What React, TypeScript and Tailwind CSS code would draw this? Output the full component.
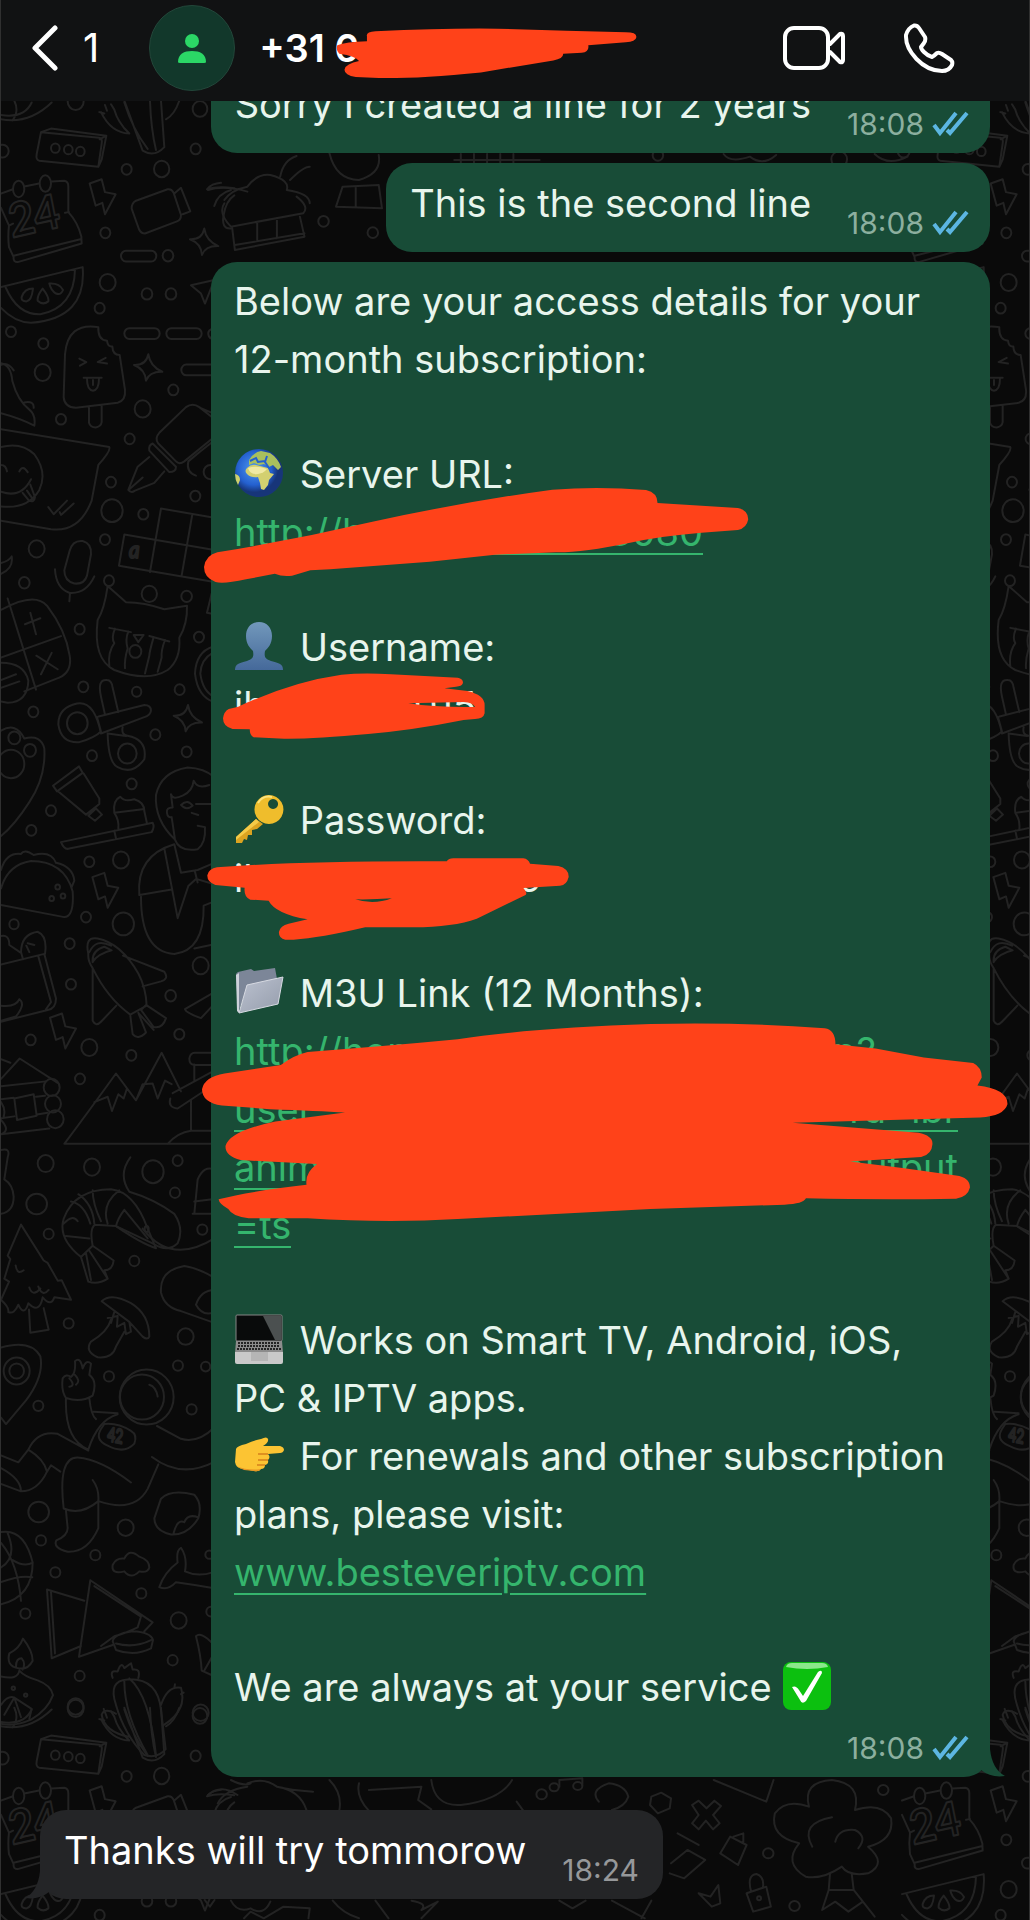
import type { ReactNode } from "react";

const BOLT = "M0 12 L36 0 L46 36 L78 42 L46 98 L38 66 L18 74 Z";
const STAR = "M43 0 Q48 34 85 49 Q46 48 36 74 Q34 42 0 30 Q36 32 43 0Z";

const dotsTop = [
  [597, 53, 22], [584, 165, 15], [377, 222, 15], [482, 221, 23], [313, 400, 15], [501, 464, 16],
  [320, 539, 24], [438, 571, 16], [510, 571, 16], [296, 611, 15], [30, 677, 15], [127, 710, 15],
  [125, 791, 24], [517, 840, 15], [425, 893, 24], [180, 922, 15], [386, 977, 15], [330, 1098, 15],
  [333, 1178, 32], [583, 1137, 15], [427, 1188, 15], [312, 1259, 15], [107, 1285, 24], [70, 1380, 16],
  [324, 1374, 15], [445, 1411, 23], [557, 1418, 16], [236, 1510, 15], [594, 1532, 15], [5, 171, 18],
  [163, 163, 13], [202, 167, 13], [238, 172, 13], [224, 32, 24], [628, 1070, 20],
];

const dotsMid = [
  [247, 187, 15], [407, 201, 14], [536, 195, 15], [97, 257, 15], [463, 321, 15], [273, 380, 15],
  [557, 369, 15], [392, 459, 15], [150, 534, 15], [91, 589, 15], [265, 677, 15], [360, 672, 24],
  [39, 852, 14], [255, 832, 15], [367, 851, 32], [206, 906, 15], [599, 968, 24], [210, 1020, 15],
  [509, 1052, 16], [535, 1160, 15], [89, 1176, 15], [265, 1197, 24], [391, 1219, 15], [237, 1285, 15],
  [134, 1522, 24], [273, 1532, 24], [530, 1514, 15], [456, 1545, 32], [229, 289, 31], [379, 374, 28],
  [40, 330, 18], [87, 365, 18], [30, 403, 40], [152, 1309, 24], [156, 1355, 24], [163, 1398, 25],
  [170, 748, 7], [152, 780, 7], [186, 773, 7],
];

const dotsLow = [
  [143, 171, 15], [522, 87, 15], [604, 162, 15], [400, 226, 15], [203, 353, 15],
  [554, 380, 24], [531, 439, 15], [614, 441, 14], [324, 461, 15], [112, 521, 15], [572, 528, 15],
  [374, 769, 24], [120, 795, 15], [283, 825, 15], [163, 860, 15], [421, 903, 15],
  [73, 944, 15], [533, 958, 24], [515, 1039, 15], [236, 1071, 15], [224, 1133, 24], [599, 1146, 24],
  [47, 450, 22], [47, 450, 39], [625, 824, 12], [630, 940, 14], [37, 1096, 5], [74, 1110, 5],
];

/* squash evens out groups whose x and y scales differ */
function Dots({ items, squash = 1 }: { items: number[][]; squash?: number }) {
  return (
    <>
      {items.map(([x, y, r], i) => (
        <ellipse key={i} cx={x} cy={y} rx={r} ry={r * squash} />
      ))}
    </>
  );
}

function Wallpaper() {
  return (
    <svg
      aria-hidden="true"
      className="absolute inset-0 h-full w-full fill-none stroke-[#232323] stroke-2 [&_*]:[vector-effect:non-scaling-stroke]"
      strokeLinecap="round"
      strokeLinejoin="round"
    >
      <g id="column">
        <g id="column-top" transform="translate(0 90) scale(.3333 .3571)">
          <Dots items={dotsTop} />
          {/* cactus and planet */}
          <path d="M-10 80 Q80 100 152 35 M0 70 Q70 80 92 35 M40 30 Q55 60 35 85 M300 62 Q330 120 385 122 Q350 90 340 55 L330 40 M312 42 L318 58 M295 62 L310 66 M370 30 L425 170 Q460 190 490 160 L480 30 M370 35 Q395 110 440 165 M447 30 Q450 110 465 168 M535 30 Q520 70 495 82" />
          {/* cassette */}
          <path d="M120 118 L295 134 Q305 136 302 150 L292 215 L115 198 Q104 196 107 180 Z M120 118 L150 108 L316 128 L302 195 L292 215 M316 128 L296 138" />
          {/* calendar */}
          <path d="M0 290 L36 278 M70 270 L114 262 M152 256 L190 254 Q202 256 202 270 V342 Q230 370 241 410 L242 430 L50 482 Q36 482 38 468 L24 440 Q20 410 24 380 L0 330 M38 464 L238 418 M24 380 L36 374 M192 344 L204 342" />
          <ellipse cx="53" cy="277" rx="17" ry="23" />
          <ellipse cx="133" cy="262" rx="17" ry="23" />
          <text x="34" y="414" fontSize="132" fontFamily="Lato, sans-serif" fontWeight="700" transform="rotate(-12 34 414)">24</text>
          <path d={BOLT} transform="translate(266 250)" />
          {/* camera */}
          <path d="M405 310 L500 278 Q512 276 518 288 L540 350 Q540 364 528 368 L432 402 Q420 402 414 390 L392 332 Q392 316 405 310Z M520 290 L540 274 L568 340 L545 348" />
          <path d={STAR} transform="translate(567 388)" />
          <path d={STAR} transform="translate(399 740)" />
          <rect x="360" y="450" width="106" height="30" rx="15" />
          <rect x="370" y="667" width="106" height="30" rx="15" />
          <rect x="496" y="667" width="106" height="30" rx="15" />
          <rect x="541" y="769" width="120" height="30" rx="15" />
          <path d="M640 667 Q620 670 622 684 Q624 697 640 697" />
          {/* watermelon */}
          <path d="M0 552 L245 496 Q258 640 90 652 Q40 650 0 610 M14 553 Q50 630 118 628 Q220 610 222 502 M62 580 Q70 556 96 556 Q92 590 76 592 Q60 592 62 580Z M125 556 Q145 580 142 592 Q126 604 110 590 Q108 575 125 556Z M145 542 Q175 540 186 560 Q180 575 165 570 Q150 562 145 542Z" />
          <path d="M570 547 L640 532 L612 598 L600 570 Z M660 260 Q632 262 618 278 Q650 268 700 275 M640 325 Q650 290 690 280 M690 388 Q660 390 668 350 Q675 310 700 295" />
          {/* ice cream */}
          <path d="M292 664 Q200 650 192 740 L188 860 Q190 888 225 890 L350 876 Q375 870 372 840 L356 742 Q335 742 334 718 Q320 720 318 702 Q290 700 292 664Z M235 752 L256 762 L237 772 M314 750 L290 762 L318 766 M248 806 H302 M258 808 Q258 840 276 842 Q294 840 294 808 M276 812 V826 M264 890 V932 Q268 945 284 945 Q300 942 302 930 V884" />
          <path d="M0 765 Q30 770 34 815 Q50 870 85 895 Q105 910 100 940 Q60 920 0 905 M70 875 Q100 870 98 890 M0 770 Q20 760 38 785" />
          {/* chat bubble face */}
          <path d="M0 950 L325 1000 Q330 1010 292 1050 L272 1150 Q235 1240 150 1230 L0 1206 M0 1000 Q60 985 100 1020 Q140 1070 115 1120 Q80 1175 0 1166 M55 1068 Q65 1048 80 1070 M0 1050 Q15 1050 18 1068 M0 1125 Q60 1145 90 1090 M65 1128 L84 1150 Q100 1156 102 1140 L88 1105 M78 1122 L95 1145 M142 1168 L158 1188 L198 1150 M176 1182 L180 1190 L218 1158" />
          {/* fountain pen */}
          <path d="M555 888 Q575 875 595 888 L645 925 M555 888 L475 960 Q460 975 472 990 L525 1040 Q535 1050 550 1040 L635 975 M455 990 L525 1055 Q525 1070 505 1070 L445 1010 Q442 995 455 990 M445 1028 L410 1055 L382 1120 Q390 1130 402 1122 L460 1100 L490 1068 M385 1118 L425 1085 M598 890 L635 905 M585 1080 Q555 1070 562 1040 Q600 1010 635 985" />
          {/* crossword */}
          <path d="M480 1172 L640 1198 M480 1172 L447 1350 M370 1245 L640 1288 M370 1245 L354 1332 L640 1378 M574 1188 L542 1360" />
          <text x="384" y="1312" fontSize="62" fontFamily="Lato, sans-serif" fontStyle="italic">a</text>
          {/* microphone */}
          <path d="M206 1290 Q215 1260 245 1263 Q272 1270 270 1300 L258 1360 Q250 1385 220 1382 Q190 1375 190 1345 Z M162 1342 Q165 1395 205 1408 Q255 1412 280 1362 M207 1410 L205 1432" />
          <path d="M0 1325 Q25 1318 32 1306 Q38 1340 0 1355 M632 1410 L618 1464 L640 1468" />
        </g>

        <g transform="translate(0 620) scale(.3333 .3571)">
          <Dots items={dotsMid} />
          {/* pill blister and cat */}
          <path d="M0 -28 Q100 -80 138 -40 Q195 30 206 100 Q215 150 165 165 L70 200 M0 105 L180 45 M20 -60 L105 195 M72 12 L118 -5 M88 -20 L105 40 M106 100 L170 138 M152 92 L120 152 M0 120 Q70 120 82 170 Q80 230 20 232 L0 228 M0 168 L45 152 M0 190 L55 172" />
          <path d="M320 -95 Q310 -30 290 0 Q275 110 340 140 Q440 175 500 140 Q540 110 535 50 Q560 10 558 -40 L490 -30 Q430 -50 375 -50 Z M325 22 L390 34 M445 45 L505 60 M342 24 Q330 50 340 65 Q320 90 325 130 M382 32 Q372 55 380 80 Q370 110 372 135 M458 48 Q445 90 445 100 L432 150 M492 56 Q480 85 482 105 L470 145 M398 42 H428 L412 62 Z" />
          <circle cx="403" cy="88" r="18" />
          {/* scissors */}
          <path d="M300 215 Q288 165 318 168 Q332 168 335 190 L352 258 M293 270 L430 238 Q450 238 450 254 Q448 268 430 272 L300 318 M300 318 Q280 225 228 234 Q172 245 172 292 Q180 345 235 342 Q280 330 300 312 L288 272 M300 215 L312 265 M320 318 Q322 400 350 412 Q395 435 430 390 Q440 335 380 324 Q360 322 365 300 M320 318 L375 325" />
          <path d={STAR} transform="translate(518 238)" />
          {/* paw */}
          <path d="M0 310 Q45 285 70 332 Q120 320 130 360 Q135 440 85 510 Q40 575 0 605" />
          <path d="M582 150 Q585 90 635 75 M598 150 Q600 110 635 92 M582 150 Q590 215 640 230 M598 150 Q605 200 640 215" />
          {/* toothpaste and brush */}
          <path d="M156 464 L234 410 L245 428 L168 480 Z M172 480 L255 545 L295 515 V500 L248 430 M262 548 L285 528 L303 545 L282 562 Z M180 622 L455 568 Q462 580 452 594 L205 640 Q190 645 180 622Z M340 590 L345 612 M340 540 Q335 505 358 495 Q370 510 400 502 Q430 510 430 535 L438 570 M340 540 L425 530 M340 540 Q355 560 352 585" />
          {/* bearded face */}
          <path d="M522 615 Q460 560 465 490 Q480 425 560 413 Q610 415 640 440 M510 488 Q515 505 545 492 Q575 480 578 450 Q590 475 625 462 M510 488 L515 525 Q495 525 498 540 Q500 555 512 552 L522 615 Q535 650 590 642 Q615 625 612 580 L590 576 M540 518 Q560 500 575 520 Q555 535 540 518Z M585 515 H635 M572 540 L592 546" />
          <path d="M415 770 Q405 660 520 628 L540 708 L590 700 L640 680 M490 640 L530 835 L562 745 L585 725 L640 740 M415 770 L512 755 M420 775 Q420 930 520 935 Q610 925 608 800 L640 788 M580 920 L640 908 M582 705 L590 735" />
          {/* taco */}
          <path d="M0 752 Q20 685 90 675 Q190 675 215 760 Q220 830 190 832 L0 798 M0 700 Q15 650 60 655 Q70 640 98 658 Q150 645 165 680 Q215 690 220 730 L212 748" />
          <path d={BOLT} transform="translate(274 708)" />
          <path d={BOLT} transform="translate(147 1102)" />
          {/* shopping bag */}
          <path d="M0 965 L130 935 L165 1060 Q165 1088 140 1092 L0 1125 M112 942 L150 1070 L135 1090 M0 885 Q25 880 25 910 L60 932 Q60 880 110 873 Q140 885 132 935 M60 930 L66 950 M80 905 L100 910 M85 930 L76 912 M0 1080 Q45 1085 55 1062 Q75 1075 45 1110 L0 1122" />
          {/* rocket */}
          <path d="M262 935 Q250 885 290 892 Q360 905 412 990 Q435 1030 437 1080 L388 1105 Q320 1060 275 975 Q260 955 262 935Z M265 930 Q285 890 330 912 M275 958 Q272 925 310 915 L332 925 Q290 935 275 958 M366 940 L490 985 Q505 1005 480 1012 L425 1026 M275 975 V1122 Q285 1140 300 1125 L346 1080 M388 1108 L395 1160 Q410 1178 435 1155 L412 1100 M435 1078 L495 1115 Q485 1145 458 1140 L420 1092 M412 1100 L458 1148 M435 1078 L420 1092" />
          <path d="M635 1045 L552 1090 Q555 1100 600 1115 L635 1080" />
          {/* cabin and mountains */}
          <path d="M0 1285 L56 1228 L170 1296 M0 1306 L135 1292 M0 1230 L28 1240 M0 1342 L38 1338 M105 1335 L132 1332 M40 1340 L98 1328 L107 1388 L48 1400 Z M0 1395 L40 1390 M108 1385 L140 1380 M0 1440 L145 1424 M0 1350 Q15 1370 8 1390 M0 1400 Q30 1430 0 1440" />
          <path d="M640 1467 H190 Q260 1380 345 1270 L405 1345 L482 1212 L540 1320 M280 1350 L320 1335 L333 1375 L352 1328 L368 1340 L378 1312 M405 1345 L425 1300 L455 1298 L470 1340 L492 1290 L512 1300 M508 1340 Q500 1365 530 1368 L640 1300 M515 1325 L640 1262 M570 1345 V1430 H640 M500 1467 Q530 1435 570 1430 M580 1245 V1290 M565 1228 Q568 1210 585 1212 H640 M565 1228 Q565 1245 580 1246 H640" />
        </g>

        <g transform="translate(0 1150) scale(.3333 .4911)">
          <Dots items={dotsLow} squash={0.7} />
          <ellipse cx="107" cy="110" rx="31" ry="21" />
          <ellipse cx="113" cy="737" rx="31" ry="21" />
          <path d="M0 0 Q30 -5 20 15 L10 60 Q35 70 38 95 Q38 125 0 130 M388 15 Q350 50 385 85 Q460 100 520 130 Q550 160 530 190 Q500 210 455 190 L345 155 M425 160 Q510 235 640 180 M590 60 Q610 30 640 40 M580 105 L640 100 M575 130 H640 M590 60 L580 130" />
          {/* shrimp */}
          <path d="M240 218 Q170 180 188 140 Q220 80 330 80 Q400 85 440 160 L465 200 Q420 190 345 155 Q350 140 370 122 M275 195 Q265 160 282 152 L345 155 M188 150 Q215 130 230 145 M195 175 L265 180 M210 105 Q250 110 268 150 M232 90 Q275 110 280 150 M275 82 Q275 110 300 145 M355 82 Q300 110 320 150 M240 218 L275 195 L338 225 Q335 245 310 245 L320 262 Q290 275 262 268 Z M255 210 L270 265 M265 205 L320 262 M370 122 L440 180" />
          <circle cx="437" cy="161" r="6" />
          {/* pine tree */}
          <path d="M60 152 L20 215 L28 222 L10 262 L24 268 L0 305 Q25 320 22 330 Q40 335 52 315 Q70 340 82 312 Q115 335 125 300 Q150 320 160 300 L210 305 L182 265 L170 266 L140 230 L128 225 L60 152 M84 325 L88 372 L143 366 L128 322 M44 235 Q48 255 68 245 M85 280 Q95 300 118 282 M112 278 Q125 300 143 285" />
          {/* mushroom */}
          <path d="M302 308 Q330 290 390 312 Q445 335 445 380 Q440 388 425 380 L385 350 L302 308 M320 342 L350 338 L348 360 L370 352 L375 375 L390 370 L385 350 M330 345 Q320 370 270 390 Q250 410 290 422 Q335 425 345 400 L370 370 M340 330 L330 352" />
          <path d="M0 402 Q90 385 118 420 Q130 460 75 510 L15 558 L0 545" />
          <path d="M640 260 Q590 240 550 236 Q475 245 480 290 Q490 320 540 328 L640 352 M585 315 Q600 285 640 285 M585 315 Q605 340 640 330" />
          {/* astronaut */}
          <ellipse cx="437" cy="503" rx="81" ry="56" />
          <ellipse cx="423" cy="503" rx="66" ry="46" />
          <path d="M445 478 Q465 482 470 502 M195 505 Q190 590 262 610 Q290 550 350 538 M265 505 Q270 540 285 548 M278 533 L350 536 M82 610 Q110 570 170 578 L262 612 M82 610 L52 636 L0 622 M82 610 Q130 630 138 655 Q110 695 60 695 Q60 670 0 648 M138 655 L150 642 L178 655 M60 695 L0 680 M188 730 Q170 625 230 626 Q300 630 390 677 M188 730 Q240 745 292 715 V770 Q260 820 200 818 Q155 810 166 795 Q200 785 200 770 L195 735 M275 672 Q295 690 292 715 Q400 740 440 690 L472 640 M453 625 Q540 670 640 635 M468 562 L540 588 Q590 598 640 565 M195 505 Q180 490 185 465 Q195 455 210 462 Q225 455 222 430 Q238 420 245 445 Q255 425 270 435 L265 458 Q290 470 275 500 Q240 515 195 505 M205 465 Q225 480 205 482 M222 458 Q240 470 225 478" />
          <path d="M310 558 Q350 555 390 572 Q410 580 400 598 Q370 620 320 602 Q280 590 300 568Z" />
          <text x="318" y="592" fontSize="40" fontFamily="Lato, sans-serif" transform="rotate(8 318 592)">42</text>
          <path d="M480 710 Q510 690 580 702 Q605 720 592 750 Q560 785 510 783 Q460 775 460 750 Z M518 780 Q530 750 550 758 Q560 740 592 748 M335 845 Q345 830 370 832 Q385 810 415 828 Q445 835 445 850 Q440 862 415 858 Q390 875 370 858 Q330 865 335 845Z M475 890 Q490 860 530 840 Q525 815 540 810 Q560 830 552 858 Q590 870 635 860 M475 890 Q500 898 525 880 Q580 885 635 892" />
          {/* basketball */}
          <path d="M0 778 Q70 770 95 840 Q95 910 0 925 M0 800 Q50 840 60 918 M20 780 Q50 830 0 850 M35 835 Q70 850 95 840 M0 880 Q60 865 94 870" />
          {/* sandwich */}
          <path d="M138 895 L250 918 M138 895 L152 1035 L240 1010 M150 900 L162 1025 M268 876 L455 962 L430 980 M268 876 L234 1032 L335 1008 M280 888 L420 950 L410 972 Q370 985 340 990 L300 1010 M335 1000 Q340 985 395 980 Q450 982 456 998 L450 1015 Q400 1032 345 1018 Z M345 1005 Q400 1015 450 998" />
          {/* lamp */}
          <path d="M66 995 Q95 1020 95 1040 Q80 1060 50 1055 Q15 1050 25 1025 Q55 1015 66 995Z M45 1052 Q45 1035 62 1035 Q75 1045 65 1058 M0 1072 Q50 1080 55 1060 Q70 1072 110 1080 Q150 1090 156 1110 Q140 1140 90 1160 Q40 1175 0 1168 M0 1130 Q20 1110 40 1115 L92 1138 L85 1158 M10 1150 L40 1115 L60 1155" />
          {/* cactus */}
          <path d="M345 1130 Q320 1080 380 1078 Q470 1075 480 1140 L494 1220 Q470 1240 430 1232 Q370 1190 345 1130Z M370 1082 Q370 1150 440 1232 M385 1076 Q445 1110 465 1232 M335 1075 Q325 1058 350 1062 Q360 1040 370 1055 L390 1045 L395 1058 Q420 1055 412 1075 M480 1130 Q500 1090 540 1095 Q560 1140 490 1170 M345 1148 Q310 1135 302 1150 Q310 1185 385 1195 M520 1095 L522 1088 M540 1108 L548 1105 M312 1145 L308 1138" />
          <path d="M585 990 Q600 980 635 1005 M585 990 Q600 1030 602 1060 L635 1070 M610 1060 L635 1030" />
        </g>
      </g>
      <use href="#column" x="901" />
      <use href="#column-top" y="1607" />
      <use href="#column-top" x="901" y="1607" />

      {/* strip between the top bubbles */}
      <g transform="scale(.6569 .3333)">
        <path d="M315 570 Q340 555 375 575 M340 600 Q350 570 375 560 M375 560 Q390 520 410 525 Q440 540 435 570 Q470 580 470 610 M425 530 Q430 480 450 468 M440 540 Q460 500 470 500 M350 680 Q330 640 340 610 M350 680 L460 640 Q470 620 450 590 M352 685 L356 750 L462 710 L455 650 M390 670 V720 M420 655 V715 M356 735 L462 700 M500 460 Q510 540 545 540 Q580 520 575 465 M510 620 L520 560 L575 555 L580 625 Z M540 560 V620" />
        <path d="M690 480 H820 M700 462 V490 M720 462 V490 M740 462 V490 M760 462 V490 M780 462 V490 M1100 462 Q1110 490 1140 470 Q1160 500 1180 465 M1330 462 Q1350 500 1380 470" />
        <ellipse cx="1276" cy="478" rx="12" ry="24" />
        <ellipse cx="1000" cy="466" rx="8" ry="16" />
        <ellipse cx="491" cy="664" rx="8" ry="16" />
        <ellipse cx="566" cy="698" rx="8" ry="16" />
      </g>

      {/* strip under the last outgoing bubble */}
      <g transform="translate(0 1770) scale(.6569 .3333)">
        <path d="M315 75 Q335 40 360 75 M330 100 Q340 60 375 50 M375 40 Q400 20 420 50 Q455 60 465 120 M350 30 Q370 50 380 40 M420 50 Q440 60 475 65 M500 30 Q520 70 515 122 M545 40 Q540 80 560 122 M560 60 L640 50 L635 90 L655 118 M655 30 Q660 110 700 105 Q760 90 778 30 M785 95 L795 122 M850 50 V30 L885 25 V45 M910 95 Q895 60 925 40 Q950 45 955 80 Q950 110 930 120 M990 80 L1005 68 L1020 85 L1018 115 L1000 130 L988 105 Z" />
        <ellipse cx="823" cy="73" rx="8" ry="15" />
        <ellipse cx="842" cy="52" rx="7" ry="12" />
        <ellipse cx="878" cy="48" rx="7" ry="12" />
        <path d="M1052 105 L1062 92 L1074 115 L1086 92 L1096 108 L1084 135 L1094 160 L1084 178 L1073 152 L1062 178 L1052 160 L1062 135 Z M1085 30 L1165 95 L1176 30 M1030 190 L1062 225 M1020 280 L1045 240 L1072 270 L1040 325 L1018 310 M1095 250 L1110 200 L1135 225 L1122 285 Z M1115 200 L1130 190 V220 M1062 370 L1080 380 L1092 345 L1095 400 L1082 410 Z M1135 370 L1165 350 L1172 410 L1145 425 Z M1142 365 Q1135 315 1150 312 Q1162 320 1160 350" />
        <ellipse cx="1168" cy="250" rx="8" ry="15" />
        <ellipse cx="1208" cy="408" rx="8" ry="15" />
        <ellipse cx="1343" cy="60" rx="8" ry="15" />
        <ellipse cx="1154" cy="385" rx="3" ry="6" />
        {/* tree */}
        <path d="M1230 110 Q1220 35 1265 30 Q1310 40 1300 120 Q1340 95 1355 145 Q1360 210 1320 230 Q1350 280 1320 310 Q1290 320 1280 290 Q1250 330 1225 320 Q1190 280 1215 220 Q1170 200 1178 130 Q1195 85 1230 110 M1235 230 Q1215 160 1265 142 M1270 215 Q1275 175 1300 180 Q1320 200 1305 235 M1262 310 L1260 360 L1298 360 L1295 310 M1260 360 L1250 420 L1270 395 L1290 425 L1312 395 L1330 440 L1298 360" />
        <path d="M310 390 L318 410 L325 390 M350 392 Q360 430 380 415 Q400 440 410 395 M370 445 L380 425 L400 445 L430 410 L470 415 L468 445 M505 392 Q520 430 545 445 M570 392 L590 445 M625 392 Q650 400 640 420 L665 395 L640 445 M850 392 L870 415 L890 392 M930 392 L980 445 M990 392 L975 445" />
      </g>
    </svg>
  );
}

function Ticks() {
  return (
    <svg viewBox="0 0 37 26" className="h-[26px] w-[37px] fill-none stroke-[#5cb6e2] stroke-4" aria-label="Read" role="img">
      <path d="M2 14 L8 22 L24 2 M15 19 L18 22 L35 2" />
    </svg>
  );
}

function Stamp({ time, read }: { time: string; read?: boolean }) {
  return (
    <span className={read ? "flex items-center gap-2 text-[#8caf9f]" : "flex items-center text-[#96989a]"}>
      <time className="text-[30px] leading-7">{time}</time>
      {read && <Ticks />}
    </span>
  );
}

function Tail({ className }: { className: string }) {
  return (
    <svg viewBox="0 0 32 40" className={className} aria-hidden="true">
      <path d="M0 12 H17 Q19 32 32 39 Q18 41 8 33 L0 36 Z" />
    </svg>
  );
}

function ShortMessage({ text, time }: { text: string; time: string }) {
  return (
    <article className="flex items-end gap-9 self-end rounded-[26px] bg-[#184c37] pt-[11px] pr-[21px] pb-[15px] pl-6">
      <p className="pb-[5px]">{text}</p>
      <Stamp time={time} read />
    </article>
  );
}

function Emoji({ label, children }: { label: string; children: ReactNode }) {
  return (
    <svg viewBox="0 0 50 50" role="img" aria-label={label} className="mr-[5px] inline-block size-[50px] align-[-10px]">
      {children}
    </svg>
  );
}

/* link line whose middle part is hidden under the marker */
function HiddenLink({ start, end, className }: { start: string; end: string; className: string }) {
  return (
    <span className={`mb-[6px] flex h-[52px] justify-between border-b-2 border-[#35b56d] ${className}`}>
      <span>{start}</span>
      <span>{end}</span>
    </span>
  );
}

function Marker({ box, className, d }: { box: string; className: string; d: string }) {
  return (
    <svg viewBox={box} preserveAspectRatio="none" className={`pointer-events-none absolute fill-[#ff4219] ${className}`} aria-hidden="true">
      <path d={d} />
    </svg>
  );
}

function Header() {
  return (
    <header className="relative z-10 flex h-[101px] items-center bg-[#111213] pr-[74px] pb-[5px] pl-[30px] text-white">
      <button type="button" aria-label="Back" className="flex items-center gap-6">
        <svg viewBox="0 0 28 46" className="h-[46px] w-7 fill-none stroke-white stroke-5" strokeLinecap="round" strokeLinejoin="round">
          <path d="M24 3 L4 23 L24 43" />
        </svg>
        <span className="text-[40px]">1</span>
      </button>
      <svg viewBox="0 0 86 86" className="ml-[50px] size-[86px] shrink-0" aria-hidden="true">
        <circle cx="43" cy="43" r="42.5" fill="#12382b" stroke="#23473a" />
        <circle cx="43" cy="36" r="7" fill="#2bd766" />
        <path d="M29 57 C29 49 35 46 43 46 S57 49 57 57 Q57 58 55 58 H31 Q29 58 29 57Z" fill="#2bd766" />
      </svg>
      <h1 className="relative ml-6 text-[38px] font-semibold">
        +31 6
        <Marker
          box="515 90 457 154"
          className="top-2 left-[77px] h-[51px] w-[301px]"
          d="M562 115 Q560 102 575 100 Q680 90 760 92 L865 98 L955 103 Q972 103 971 118 Q970 132 955 133 L898 142 Q900 162 888 165 L860 168 Q860 183 845 188 L735 224 Q640 243 580 241 L545 238 Q527 232 528 215 Q530 198 550 190 Q545 175 520 168 Q514 155 517 142 Q530 132 562 130Z"
        />
      </h1>
      <nav className="ml-auto flex items-center gap-[58px]">
        <button type="button" aria-label="Video call">
          <svg viewBox="0 0 62 44" className="h-11 w-[62px] fill-none stroke-white stroke-4" strokeLinejoin="round" strokeLinecap="round">
            <rect x="2" y="2" width="43" height="40" rx="9" />
            <path d="M47 18 L57 8 Q60 7 60 10 V34 Q60 37 57 36 L47 26" />
          </svg>
        </button>
        <button type="button" aria-label="Voice call">
          <svg viewBox="0 0 52 50" className="h-[50px] w-[52px] fill-none stroke-white stroke-4" strokeLinejoin="round">
            <path d="M3 12 Q5 5 11 2.500 Q14 2 16 5 L22 14 Q23 17 21 20 L18 24 Q18 26 21 29 Q25 33 29 34 Q31 33 34 30 Q36 29 39 31 L48 37 Q50 39 49 42 Q46 48 39 48 C20 48 2 28 3 12Z" />
          </svg>
        </button>
      </nav>
    </header>
  );
}

function AccessMessage() {
  return (
    <article className="relative w-[779px] self-end rounded-[26px] bg-[#184c37] pt-[10px] pr-[21px] pb-[15px] pl-[23px]">
      <div className="flex flex-col gap-[57px] pb-[18px]">
        <p>
          Below are your access details for your
          <br />
          12-month subscription:
        </p>

        <div className="relative">
          <p>
            <Emoji label="Globe">
              <defs>
                <radialGradient id="sea" cx=".4" cy=".4">
                  <stop offset="0" stopColor="#4f9af0" />
                  <stop offset=".7" stopColor="#2460cf" />
                  <stop offset="1" stopColor="#173579" />
                </radialGradient>
              </defs>
              <circle cx="25" cy="25" r="24" fill="url(#sea)" />
              <path d="M15 12 Q20 4 27 3 L36 5 Q44 10 47 19 L44 22 L39 17 L35 19 L30 16 L25 17 L20 15 L15 17Z" fill="#a9bf5d" />
              <path d="M13 20 Q17 16 22 17 L34 20 L36 25 L40 26 L35 32 L34 37 L30 42 L27 41 L26 35 L24 29 Q17 30 13 26 Q10 23 13 20Z" fill="#d3d070" />
              <path d="M14 20 Q22 17 33 21 Q30 25 24 26 Q16 27 14 20Z" fill="#f0e9a4" />
              <path d="M16 13 L22 10 L24 14 L31 13 M33 8 L31 14 L35 20 L38 24" fill="none" stroke="#2460cf" strokeWidth="2" />
              <path d="M1 26 Q6 27 6 32 L4 37 Q1 32 1 26Z" fill="#cfd06b" />
            </Emoji>{" "}
            Server URL:
          </p>
          <a href="#server" className="block text-[#35b56d]">
            <HiddenLink start="http://h" end="8080" className="w-[469px]" />
          </a>
          <Marker
            box="10 178 1424 288"
            className="top-[42px] left-[-30px] h-24 w-[545px]"
            d="M45 374 Q250 335 450 282 Q700 220 920 186 Q1040 175 1165 187 Q1195 195 1195 226 L1405 241 Q1432 248 1432 275 Q1428 302 1405 307 L1310 315 Q1200 325 1120 346 Q1000 375 930 374 L770 381 L600 402 L340 425 L288 428 L240 444 Q215 448 195 438 L120 455 Q60 470 40 463 Q10 450 10 418 Q15 382 45 374Z"
          />
        </div>

        <div className="relative">
          <p>
            <Emoji label="User">
              <defs>
                <linearGradient id="bust" x2="0" y2="1">
                  <stop offset="0" stopColor="#7298bb" />
                  <stop offset="1" stopColor="#45699a" />
                </linearGradient>
              </defs>
              <path d="M25 1 C33 1 38 7 38 15 C38 23 34 27 31 30 C30 36 31 38 37 40 C45 42 49 43 49 49 H1 C1 43 5 42 13 40 C19 38 20 36 19 30 C16 27 12 23 12 15 C12 7 17 1 25 1Z" fill="url(#bust)" />
            </Emoji>{" "}
            Username:
          </p>
          <p className="flex w-[242px] justify-between">
            <span>ib</span>
            <span>015</span>
          </p>
          <Marker
            box="60 734 686 198"
            className="top-[55px] left-[-11px] h-[66px] w-[262px]"
            d="M75 842 L100 835 Q240 760 370 739 Q430 732 500 738 L675 748 Q690 752 688 765 Q685 775 670 775 L640 780 L700 788 Q745 800 745 830 V855 Q742 872 720 872 L690 875 Q560 905 440 917 Q300 932 220 931 L140 927 Q130 922 130 903 L85 902 Q60 895 60 870 Q62 850 75 842Z M545 825 Q620 838 720 836 Q715 822 690 821 Z"
          />
        </div>

        <div className="relative">
          <p>
            <Emoji label="Key">
              <path d="M22 25 L2 43 V49 L8 49 L10 45 L13 46 L14 41 L18 41 L18 36 L23 35 L29 30Z" fill="#dba320" />
              <path d="M22 25 L2 43 V46 L25 28Z" fill="#f4ca48" />
              <path d="M35 1 A14.500 14.500 0 1 1 34.900 1Z M39 5 A5 5 0 1 0 39.100 5Z" fillRule="evenodd" fill="#efbd2c" />
              <path d="M24 9 Q29 1 38 3" fill="none" stroke="#fbe37e" strokeWidth="2" />
            </Emoji>{" "}
            Password:
          </p>
          <p className="flex w-[308px] justify-between">
            <span>ib</span>
            <span>9</span>
          </p>
          <Marker
            box="20 238 1087 246"
            className="top-[67px] left-[-27px] h-[82px] w-[362px]"
            d="M50 266 Q300 246 740 248 Q745 239 760 239 H970 Q985 241 990 255 L1075 262 Q1107 270 1106 295 Q1100 320 1080 321 L970 328 Q985 345 975 350 L830 420 Q760 445 640 446 L495 446 Q360 478 280 483 H255 Q235 480 236 460 Q240 440 265 435 L322 422 Q225 405 205 366 L150 363 Q130 355 133 327 L45 319 Q20 310 21 290 Q25 270 50 266Z M465 362 Q520 380 575 359 Q520 363 465 362Z"
          />
        </div>

        <div className="relative">
          <p>
            <Emoji label="Folder">
              <defs>
                <linearGradient id="flap" x2="1" y2="1">
                  <stop offset="0" stopColor="#bcc2d0" />
                  <stop offset="1" stopColor="#949cab" />
                </linearGradient>
              </defs>
              <path d="M2 8 Q2 6 4 5 L17 2 L20 4 L41 1 L43 12 L12 24 L4 46 Z" fill="#7c8698" />
              <path d="M2 8 L5 6 V46 L3 44Z" fill="#cdd1da" />
              <path d="M13 18 L49 10 L44 37 L5 46 Z" fill="url(#flap)" stroke="#d7dae2" />
            </Emoji>{" "}
            M3U Link (12 Months):
          </p>
          <a href="#m3u" className="block text-[#35b56d]">
            <HiddenLink start="http://hom" end="p?" className="w-[642px]" />
            <HiddenLink start="user" end="rd=ibr" className="w-[724px]" />
            <HiddenLink start="anim" end="output" className="w-[724px]" />
            <span className="mb-[6px] block h-[52px] w-fit border-b-2">=ts</span>
          </a>
          <Marker
            box="23 76 1504 598"
            className="top-[59px] left-[-32px] h-[199px] w-[806px]"
            d="M65 228 L170 202 Q195 172 220 163 Q370 145 500 125 Q640 90 860 79 Q1020 72 1185 92 Q1205 97 1205 140 L1280 153 L1370 180 L1462 196 Q1478 208 1478 240 L1470 264 Q1527 275 1526 320 Q1520 355 1475 360 L1125 376 L1360 406 Q1387 415 1386 440 Q1385 470 1365 479 L1232 492 L1330 512 L1430 534 Q1456 540 1456 570 Q1452 598 1430 604 Q1300 608 1150 603 Q1145 620 1110 622 L860 635 L500 665 Q370 678 220 663 L110 663 Q80 658 72 635 Q55 620 54 606 Q110 582 218 562 Q215 525 238 500 L95 488 Q65 475 67 445 Q75 400 160 372 L290 345 Q240 340 150 335 L60 324 Q23 315 23 275 Q28 238 65 228Z"
          />
        </div>

        <p>
          <Emoji label="Laptop">
            <rect x="2" y="1" width="46" height="26" rx="1" fill="#090b0b" stroke="#858585" />
            <path d="M29 2 H47 V26 H41Z" fill="#4b5050" />
            <path d="M2 27 H48 L49 39 H1Z" fill="#8c8c8c" />
            <path d="M4 29 H46 M4 32 H46 M3 35 H47" stroke="#242424" strokeWidth="2" strokeDasharray="2 1" />
            <path d="M1 38 H49 V48 Q49 50 47 50 H3 Q1 50 1 48Z" fill="#c9c9c9" />
            <rect x="17" y="38" width="17" height="9" fill="#b5b5b5" />
          </Emoji>{" "}
          Works on Smart TV, Android, iOS,
          <br />
          PC &amp; IPTV apps.
          <br />
          <Emoji label="Pointing right">
            <path d="M2 19 Q3 16 12 14 Q21 10 27 9 Q33 6 34 9 Q35 12 29 16 L46 16 Q50 17 50 20 Q49 23 46 23 L34 24 Q37 27 34 30 Q35 34 31 35 Q31 39 27 39 Q25 42 20 41 L10 39 Q2 39 1 32Z" fill="#fcc433" />
            <path d="M34 24 H24 M34 30 H24 M31 35 H23" fill="none" stroke="#df9120" strokeWidth="2" />
            <path d="M2 36 Q14 41 27 39 Q25 42 20 41 L10 40Z" fill="#e69724" />
          </Emoji>{" "}
          For renewals and other subscription
          <br />
          plans, please visit:
          <br />
          <a href="#site" className="text-[#35b56d] underline decoration-2 underline-offset-[7px]">
            www.besteveriptv.com
          </a>
        </p>

        <p>
          We are always at your service{" "}
          <Emoji label="Check mark">
            <rect x="1" y="1" width="48" height="48" rx="8" fill="#0cc00f" />
            <path d="M4 6 Q5 2 10 2 H40 Q45 2 46 6 Q25 10 4 6Z" fill="#8be88b" />
            <path d="M10 26 Q14 24 17 29 L21 35 L36 11 Q40 8 40 12 L24 40 Q20 44 18 39Z" fill="#fff" />
          </Emoji>
        </p>
      </div>
      <div className="flex justify-end">
        <Stamp time="18:08" read />
      </div>
      <Tail className="absolute right-[-15px] bottom-0 h-10 w-8 fill-[#184c37]" />
    </article>
  );
}

export default function App() {
  return (
    <div className="relative min-h-screen overflow-hidden border-x border-[#303030] bg-[#0a0a0a] font-[Inter,sans-serif]">
      <Wallpaper />
      <Header />
      <main className="relative -mt-[37px] flex flex-col gap-[10px] px-[39px] pb-5 text-[38px] leading-[58px] text-[#e8f5ed]">
        <ShortMessage text="Sorry I created a line for 2 years" time="18:08" />
        <ShortMessage text="This is the second line" time="18:08" />
        <AccessMessage />
        <article className="relative mt-[23px] flex items-end gap-9 self-start rounded-[26px] bg-[#242527] pt-[11px] pr-6 pb-[15px] pl-6 text-white">
          <p className="pb-[5px]">Thanks will try tommorow</p>
          <Stamp time="18:24" />
          <Tail className="absolute bottom-0 left-[-15px] h-10 w-8 -scale-x-100 fill-[#242527]" />
        </article>
      </main>
    </div>
  );
}
